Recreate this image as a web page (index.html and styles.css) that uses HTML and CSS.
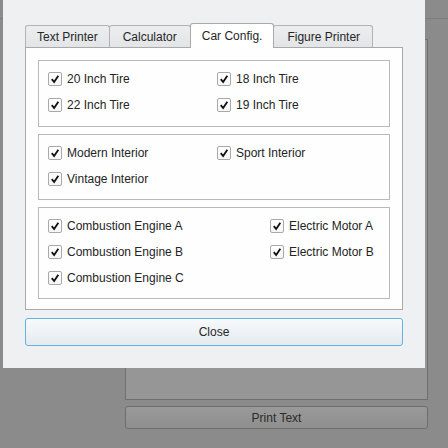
FILE: index.html
```html
<!DOCTYPE html>
<html>
<head>
<meta charset="utf-8">
<link rel="stylesheet" href="styles.css">
</head>
<body>
<div class="screen">
  <div class="app">
    <div class="app-bar"></div>
    <div class="app-content">
      <div class="app-box"></div>
      <div class="app-button">Print Text</div>
    </div>
  </div>

  <div class="dialog">
    <div class="tabs">
      <div class="tab">Text Printer</div>
      <div class="tab tab-wide">Calculator</div>
      <div class="tab tab-selected">Car Config.</div>
      <div class="tab tab-mid">Figure Printer</div>
    </div>
    <div class="pane">
      <div class="group group-tires">
        <label class="check"><span class="box"><svg viewBox="0 0 14 14"><path d="M3.2 7.2 L6 10.6 L10.9 3.2"/></svg></span>20 Inch Tire</label>
        <label class="check"><span class="box"><svg viewBox="0 0 14 14"><path d="M3.2 7.2 L6 10.6 L10.9 3.2"/></svg></span>18 Inch Tire</label>
        <label class="check"><span class="box"><svg viewBox="0 0 14 14"><path d="M3.2 7.2 L6 10.6 L10.9 3.2"/></svg></span>22 Inch Tire</label>
        <label class="check"><span class="box"><svg viewBox="0 0 14 14"><path d="M3.2 7.2 L6 10.6 L10.9 3.2"/></svg></span>19 Inch Tire</label>
      </div>
      <div class="group">
        <label class="check"><span class="box"><svg viewBox="0 0 14 14"><path d="M3.2 7.2 L6 10.6 L10.9 3.2"/></svg></span>Modern Interior</label>
        <label class="check"><span class="box"><svg viewBox="0 0 14 14"><path d="M3.2 7.2 L6 10.6 L10.9 3.2"/></svg></span>Sport Interior</label>
        <label class="check"><span class="box"><svg viewBox="0 0 14 14"><path d="M3.2 7.2 L6 10.6 L10.9 3.2"/></svg></span>Vintage Interior</label>
      </div>
      <div class="group group-engines">
        <label class="check"><span class="box"><svg viewBox="0 0 14 14"><path d="M3.2 7.2 L6 10.6 L10.9 3.2"/></svg></span>Combustion Engine A</label>
        <label class="check"><span class="box"><svg viewBox="0 0 14 14"><path d="M3.2 7.2 L6 10.6 L10.9 3.2"/></svg></span>Electric Motor A</label>
        <label class="check"><span class="box"><svg viewBox="0 0 14 14"><path d="M3.2 7.2 L6 10.6 L10.9 3.2"/></svg></span>Combustion Engine B</label>
        <label class="check"><span class="box"><svg viewBox="0 0 14 14"><path d="M3.2 7.2 L6 10.6 L10.9 3.2"/></svg></span>Electric Motor B</label>
        <label class="check"><span class="box"><svg viewBox="0 0 14 14"><path d="M3.2 7.2 L6 10.6 L10.9 3.2"/></svg></span>Combustion Engine C</label>
      </div>
    </div>
    <div class="close-btn">Close</div>
  </div>
</div>
</body>
</html>
```

FILE: styles.css
```css
* { box-sizing: border-box; }

html, body {
  margin: 0;
  padding: 0;
}

body {
  background: #8b8b8b;
  font-family: "Liberation Sans", Arial, sans-serif;
  font-size: 12px;
  color: #242424;
}

.screen {
  position: relative;
  width: 448px;
  height: 448px;
  overflow: hidden;
}

/* underlying (dimmed) application */
.app {
  display: flex;
  flex-direction: column;
  height: 100%;
}

.app-bar {
  height: 19px;
  border-bottom: 1px solid #7d7d7d;
}

.app-content {
  display: flex;
  flex-direction: column;
  gap: 6px;
  padding: 20px 20px 0 125px;
}

.app-box {
  height: 361px;
  border: 1px solid #6f6f6f;
  background: #969696;
}

.app-button {
  height: 23px;
  border: 1px solid #6e6e6e;
  border-radius: 3px;
  background: linear-gradient(#999999, #8f8f8f);
  color: #2a2a2a;
  display: flex;
  align-items: center;
  justify-content: center;
}

/* dialog */
.dialog {
  position: absolute;
  left: 3px;
  top: 0;
  width: 422px;
  height: 368px;
  background: #eff0f2;
  padding: 23px 22px 22px 22px;
  display: flex;
  flex-direction: column;
}

.tabs {
  display: flex;
  align-items: flex-end;
  height: 24px;
}

.tab {
  height: 22px;
  padding: 0 11px;
  border: 1px solid #b3b3b3;
  border-bottom: none;
  border-radius: 3px 3px 0 0;
  background: linear-gradient(#eceef0, #e2e4e6);
  display: flex;
  align-items: center;
  white-space: nowrap;
  color: #262626;
}

.tab + .tab {
  margin-left: -1px;
}

.tab-wide {
  padding: 0 13px;
}

.tab-mid {
  padding: 0 12px 0 13px;
}

.tab-selected {
  position: relative;
  z-index: 1;
  height: 25px;
  margin-bottom: -1px;
  padding-bottom: 1px;
  background: #ffffff;
  border-color: #a9a9a9;
}

.pane {
  height: 263px;
  border: 1px solid #a9a9a9;
  background: #fefefe;
  padding: 12px 12px 10px 12px;
  display: flex;
  flex-direction: column;
  gap: 7px;
}

.group {
  border: 1px solid #b9b9b9;
  padding: 5px 9px 7px 9px;
  display: grid;
  grid-template-columns: 169px auto;
  grid-auto-rows: 26px;
}

.group-tires {
  padding-bottom: 8px;
}

.group-engines {
  grid-template-columns: 222px auto;
}

.check {
  display: flex;
  align-items: center;
  gap: 5px;
  white-space: nowrap;
}

.box {
  width: 14px;
  height: 14px;
  border: 1px solid #a8a8a8;
  border-radius: 2px;
  background: linear-gradient(#ffffff, #f6f6f6);
  display: flex;
  flex-shrink: 0;
}

.box svg {
  width: 12px;
  height: 12px;
  fill: none;
  stroke: #111111;
  stroke-width: 2.1;
  stroke-linecap: butt;
  stroke-linejoin: miter;
}

.close-btn {
  margin-top: 8px;
  height: 29px;
  border: 1px solid #62b3e3;
  border-radius: 3px;
  background: linear-gradient(#f8fafc, #e4eaef);
  display: flex;
  align-items: center;
  justify-content: center;
  color: #262626;
}
```
